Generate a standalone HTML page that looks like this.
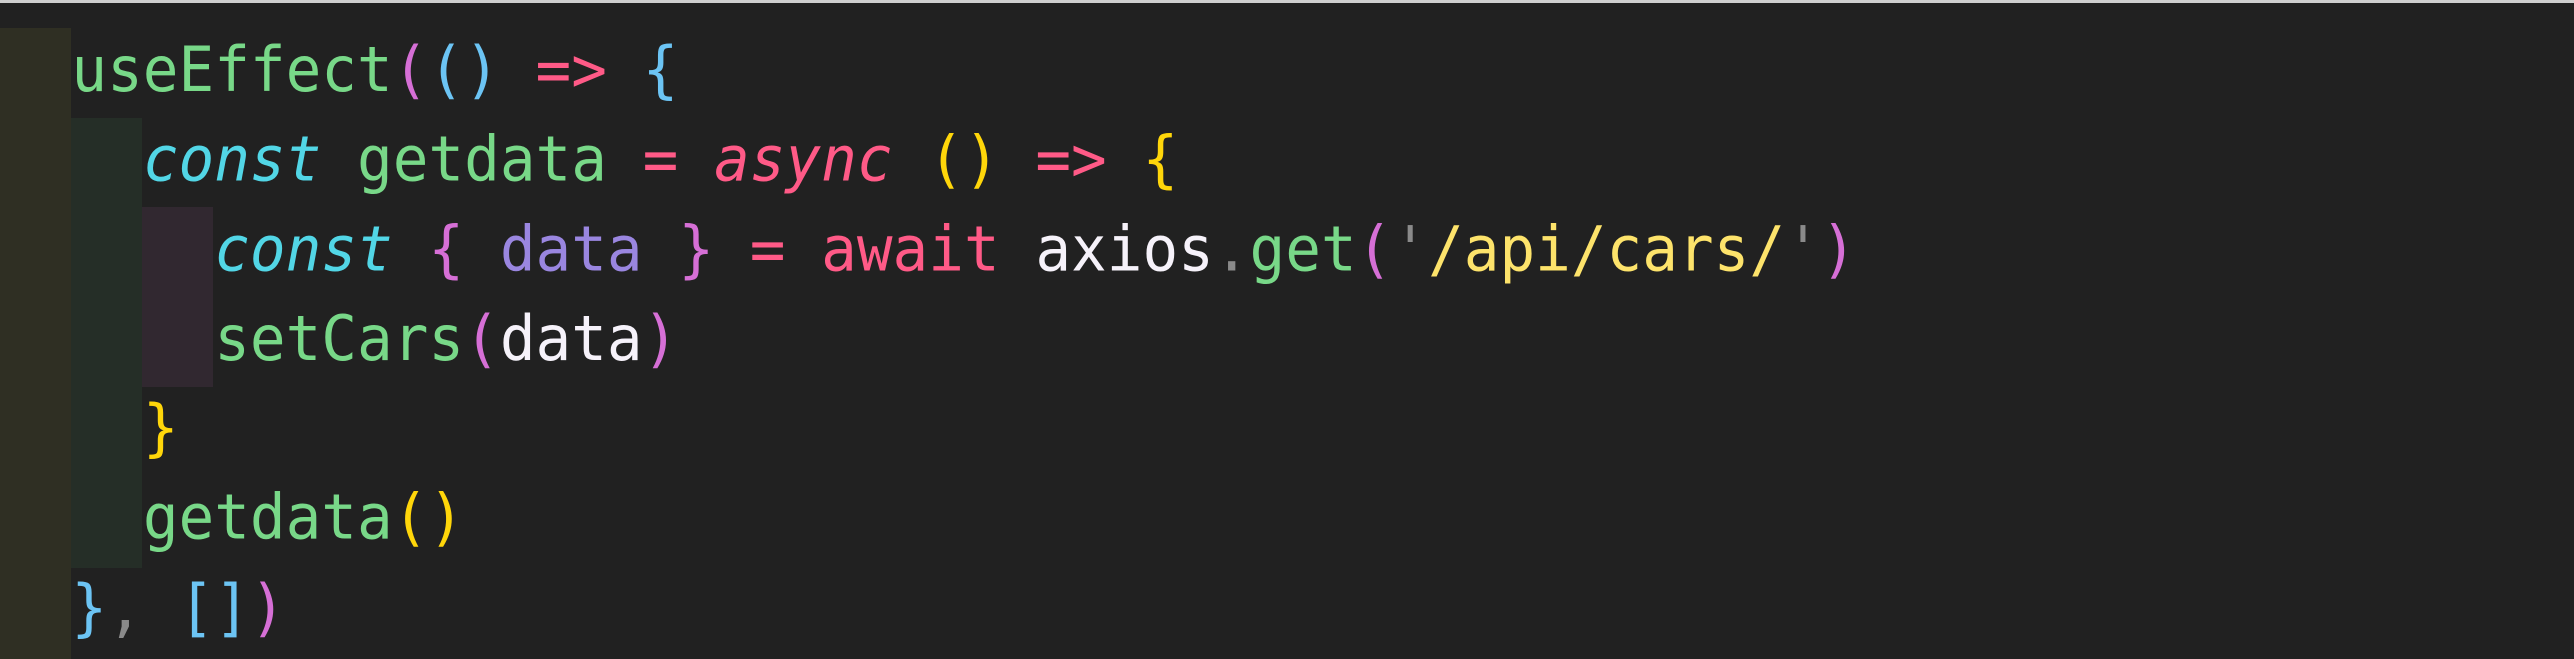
<!DOCTYPE html>
<html><head><meta charset="utf-8"><style>
html,body{margin:0;padding:0}
body{width:2574px;height:656px;background:#212121;position:relative;overflow:hidden;border-top:3px solid #cfcfcf;box-sizing:border-box}
.b{position:absolute}
pre{position:absolute;left:0;top:25px;margin:0;font-family:"DejaVu Sans Mono","Liberation Mono",monospace;font-size:59.3px;line-height:89.5px;color:#f8f8f2;white-space:pre;transform:scaleY(1.05);transform-origin:0 0}
.g{color:#78d888}.c{color:#52d6e6;font-style:italic}.p{color:#ff5a87}.pi{color:#ff5a87;font-style:italic}
.lb{color:#6cc4f4}.m{color:#d66fd6}.y{color:#ffd60a}.s{color:#fde36b}.q{color:#8a8a8a}.v{color:#9a86e0}.w{color:#f6f2fa}
</style></head><body>
<div class="b" style="left:0;top:25px;width:71px;height:631px;background:#2f2f23"></div>
<div class="b" style="left:71px;top:115px;width:71px;height:450px;background:#252e27"></div>
<div class="b" style="left:142px;top:204px;width:71px;height:180px;background:#312830"></div>
<pre style="top:22px;line-height:85.3px">  <span class="g">useEffect</span><span class="m">(</span><span class="lb">()</span> <span class="p">=&gt;</span> <span class="lb">{</span>
    <span class="c">const</span> <span class="g">getdata</span> <span class="p">=</span> <span class="pi">async</span> <span class="y">()</span> <span class="p">=&gt;</span> <span class="y">{</span>
      <span class="c">const</span> <span class="m">{</span> <span class="v">data</span> <span class="m">}</span> <span class="p">=</span> <span class="p">await</span> <span class="w">axios</span><span class="q">.</span><span class="g">get</span><span class="m">(</span><span class="q">'</span><span class="s">/api/cars/</span><span class="q">'</span><span class="m">)</span>
      <span class="g">setCars</span><span class="m">(</span><span class="w">data</span><span class="m">)</span>
    <span class="y">}</span>
    <span class="g">getdata</span><span class="y">()</span>
  <span class="lb">}</span><span class="q">,</span> <span class="lb">[]</span><span class="m">)</span></pre>
</body></html>
